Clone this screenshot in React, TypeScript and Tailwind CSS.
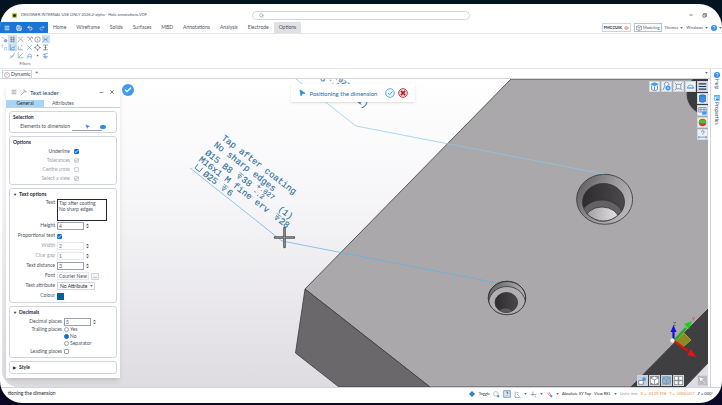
import { type ReactNode } from "react";
import { Check, Menu, Minus, MousePointer2, Redo2, Save, Search, Undo2, X } from "lucide-react";

const TABS = ["Home", "Wireframe", "Solids", "Surfaces", "MBD", "Annotations", "Analysis", "Electrode"];

function Icon({ children, className = "size-[9px]" }: { children: ReactNode; className?: string }) {
  return (
    <svg viewBox="0 0 12 12" className={className} fill="none" stroke="#4f7fae" strokeWidth="1">
      {children}
    </svg>
  );
}

function Caret() {
  return (
    <svg viewBox="0 0 4 3" className="h-[2px] w-[3px] shrink-0 fill-gray-500">
      <path d="M0 0h4L2 3z" />
    </svg>
  );
}

function HelpMark({ className = "size-[6px]" }: { className?: string }) {
  return (
    <svg viewBox="0 0 12 12" className={className} fill="none">
      <circle cx="6" cy="6" r="6" fill="#2b8cee" />
      <path d="M4 4.6a2 2 0 1 1 2.8 1.9Q6 7 6 7.6M6 9v1.2" stroke="#fff" strokeWidth="1.4" />
    </svg>
  );
}

function TitleBar() {
  return (
    <header className="flex h-[18px] items-center justify-between pr-[15px] pt-[4px] pl-3">
      <div className="flex w-60 items-center gap-[4px] text-[4px] text-gray-600">
        <span className="flex size-[5px] items-center justify-center rounded-[1px] bg-[#b5d334]">
          <span className="size-[3px] rounded-full bg-[#222]" />
        </span>
        DESIGNER INTERNAL USE ONLY 2026.2-alpha - Hole annotations.VDF
      </div>
      <label className="flex h-[9px] flex-1 items-center rounded-full border border-gray-300 px-[6px]">
        <Search className="size-[5px] text-gray-500" />
        <input aria-label="Search" className="h-1 min-w-0 flex-1 text-[5px] outline-none" />
      </label>
      <div className="flex w-[237px] items-center justify-end gap-[9px] text-gray-700">
        <button aria-label="Minimise">
          <Minus className="size-1" strokeWidth={4} />
        </button>
        <button aria-label="Restore">
          <Icon className="size-[5px]">
            <path d="M2 4h6v6H2zM4 4V1h7v7H8" stroke="#444" strokeWidth="1.5" />
          </Icon>
        </button>
      </div>
    </header>
  );
}

function MenuBar() {
  return (
    <nav className="flex h-3 items-stretch border-b border-gray-200 text-[5px] text-gray-600">
      <div className="flex w-12 items-center justify-around bg-[#1e74d2] pl-[1px] text-white">
        <button aria-label="Menu"><Menu className="size-[6px]" strokeWidth={3} /></button>
        <button aria-label="Save"><Save className="size-[6px]" strokeWidth={3} /></button>
        <button aria-label="Undo"><Undo2 className="size-[6px]" strokeWidth={3} /></button>
        <button aria-label="Redo" className="opacity-60"><Redo2 className="size-[6px]" strokeWidth={3} /></button>
      </div>
      {TABS.map((tab) => (
        <button key={tab} className="px-[5px]">{tab}</button>
      ))}
      <button className="bg-[#e2e0e4] px-[5px]">Options</button>
      <div className="ml-auto flex items-center gap-[3px] text-[4px]">
        <button className="flex h-[9px] items-center gap-[2px] border border-[#c5d8ea] px-[1px] font-bold text-gray-800">
          FMCCUIK
          <Icon className="h-[4px] w-[5px]">
            <ellipse cx="6" cy="6" rx="5" ry="4" stroke="#e05656" strokeWidth="2" />
            <circle cx="6" cy="6" r="1.5" fill="#e05656" stroke="none" />
          </Icon>
        </button>
        <button className="flex h-[9px] items-center gap-[1px] border border-[#a9c6e3] px-[1px]">
          <Icon className="size-[6px]">
            <path d="M6 1l5 2v6l-5 2-5-2V3zM1 3l5 2 5-2M6 5v6" stroke="#666" />
          </Icon>
          Modeling
        </button>
        <button className="flex items-center gap-[2px]">Themes <Caret /></button>
        <button className="flex items-center gap-[2px]">Windows <Caret /></button>
        <button aria-label="Help" className="flex items-center gap-[2px]"><HelpMark /> <Caret /></button>
      </div>
    </nav>
  );
}

const FILTERS: { name: string; on?: boolean; art: ReactNode }[] = [
  { name: "Point", art: <><path d="M1 3h2M5 3v2" /><circle cx="8" cy="8" r="2.2" fill="#7fbcf2" /></> },
  { name: "Grid", on: true, art: <path d="M2 3h8M2 6h8M2 9h8M4 1v10M8 1v10" stroke="#777" /> },
  { name: "Slope", art: <path d="M1 11l5-6 4-4M6 5l5 5M2 3h3" /> },
  { name: "Node", art: <path d="M1 2h4l5 8M10 2L4 8M8 2h3v3" /> },
  { name: "Centre", art: <><circle cx="6" cy="6" r="4.6" stroke="#666" /><path d="M6 4v4" /></> },
  { name: "Faces", on: true, art: <path d="M1 2l10 8M1 10l10-8M3 6h6" stroke="#3f8fdc" /> },
  { name: "Ends", art: <><path d="M1 2h3M1 5h2" /><path d="M6 6h4v4H6z" stroke="#9bb6cf" /></> },
  { name: "Edge", on: true, art: <><path d="M2 1v9h9M3 9l3-4 2 2 3-4" stroke="#2b7fd4" /><circle cx="7" cy="6" r="1.4" fill="#8bc34a" stroke="none" /></> },
  { name: "Corner", art: <path d="M2 3v7h8M8 2v2M5 7h2" stroke="#68836f" /> },
  { name: "Cross", art: <path d="M2 2l8 8M10 2l-8 8" stroke="#3f8fdc" /> },
  { name: "Quadrant", art: <><circle cx="6" cy="6" r="3.4" /><path d="M6 0v3M6 9v3M0 6h3M9 6h3" stroke="#555" /></> },
  { name: "Middle", art: <path d="M2 2h8M2 10h8M6 2v8M4 6h4" stroke="#555" /> },
  { name: "None", art: null },
  { name: "Line", art: <path d="M2 11l8-9M5 9l3-3M2 7h2" /> },
  { name: "Tangent", art: <><path d="M2 1v9h9" stroke="#68a868" /><path d="M3 9l7-7" /></> },
  { name: "Arc", art: <path d="M4 8a3 3 0 1 1 5 0H2v3M9 8v3" stroke="#3f8fdc" /> },
  { name: "Dot", art: <path d="M6 4.500v3M4.500 6h3" stroke="#555" /> },
  { name: "Surface", art: <path d="M1 5l9-3M2 8h8M3 10h6M5 3v7" stroke="#2b7fd4" /> },
];

function Ribbon() {
  return (
    <section className="h-[35px] border-b border-gray-200 pt-[1px]">
      <div className="grid w-[50px] grid-cols-6">
        {FILTERS.map((filter) => (
          <button
            key={filter.name}
            aria-label={filter.name}
            className={`flex h-2 items-center justify-center ${filter.on ? "bg-[#cfe3f7]" : ""}`}
          >
            <Icon className="size-[7px]">{filter.art}</Icon>
          </button>
        ))}
      </div>
      <p className="w-[50px] text-center text-[4px] leading-[9px] text-gray-600">Filters</p>
    </section>
  );
}

function Group({ title, arrow, children }: { title: string; arrow?: string; children?: ReactNode }) {
  return (
    <section className="rounded-[3px] border border-gray-300 px-[3px] py-[1px]">
      <h3 className="flex h-[9px] items-center text-[5px] font-bold text-gray-800">
        {arrow && <span className="w-[6px] text-[4px]">{arrow}</span>}
        {title}
      </h3>
      {children}
    </section>
  );
}

const ROW = {
  options: { row: "h-[9px] gap-[4px]", label: "w-[57px]" },
  text: { row: "h-[10px] gap-[2px]", label: "w-[42px]" },
  decimals: { row: "h-[9px] gap-[2px]", label: "w-[49px]" },
};

function Row({
  label,
  id,
  kind = "text",
  dim,
  children,
}: {
  label: string;
  id: string;
  kind?: keyof typeof ROW;
  dim?: boolean;
  children: ReactNode;
}) {
  return (
    <div className={`flex items-center ${ROW[kind].row}`}>
      <label
        htmlFor={id}
        className={`shrink-0 text-right whitespace-nowrap ${ROW[kind].label} ${dim ? "text-gray-400" : ""}`}
      >
        {label}
      </label>
      {children}
    </div>
  );
}

function Tick({ id, checked, dim }: { id: string; checked?: boolean; dim?: boolean }) {
  return (
    <span className="relative flex size-[5px]">
      <input
        id={id}
        type="checkbox"
        defaultChecked={checked}
        disabled={dim}
        className="size-[5px] appearance-none rounded-[1px] border border-gray-400 checked:border-[#0b6fe0] checked:bg-[#0b6fe0] disabled:border-gray-300 disabled:bg-gray-100"
      />
      {checked && (
        <Check
          className={`pointer-events-none absolute inset-0 size-[5px] ${dim ? "text-gray-400" : "text-white"}`}
          strokeWidth={4}
        />
      )}
    </span>
  );
}

function Spinner({ id, value, dim }: { id: string; value: string; dim?: boolean }) {
  return (
    <>
      <input
        id={id}
        defaultValue={value}
        disabled={dim}
        className="h-2 w-[27px] border border-gray-400 px-[1px] text-[5px] text-gray-600 disabled:border-gray-200 disabled:text-gray-500"
      />
      <svg viewBox="0 0 4 8" className="h-[6px] w-[3px] fill-gray-600">
        <path d="M0 3h4L2 1zM0 5h4L2 7z" />
      </svg>
    </>
  );
}

function LeaderPanel() {
  return (
    <aside className="absolute top-[5px] left-1 flex w-[114px] flex-col bg-white text-[5px] text-gray-600 shadow-md">
      <div className="flex h-4 items-center gap-[3px] px-[5px]">
        <Menu className="size-[6px]" strokeWidth={2} />
        <Icon className="size-[7px]">
          <path d="M1 11l6-6h4M8 2l3 3M7 1v3" />
        </Icon>
        <h2 className="flex-1 text-[6px] text-[#24456b]">Text leader</h2>
        <button aria-label="Collapse"><Minus className="size-[5px]" strokeWidth={3} /></button>
        <button aria-label="Close" className="ml-[2px]"><X className="size-[6px]" strokeWidth={3} /></button>
      </div>
      <div className="flex h-2 items-stretch border-b border-[#bcd9c6] leading-[7px]">
        <button className="w-[38px] bg-[#a9d3f7] text-gray-800">General</button>
        <button className="w-[38px]">Attributes</button>
      </div>
      <div className="flex flex-col gap-[3px] p-[3px] pb-[4px]">
        <Group title="Selection">
          <div className="flex h-[9px] items-center gap-[2px]">
            <label htmlFor="elements" className="w-[57px] text-right">Elements to dimension</label>
            <span className="flex h-full w-[30px] items-center justify-center border-b border-gray-400">
              <button id="elements" aria-label="Pick elements">
                <MousePointer2 className="size-[5px] fill-[#2b8cee] text-[#2b8cee]" />
              </button>
            </span>
            <span className="-ml-[4px] h-1 w-[6px] rounded-full bg-[#2b8cee]" />
          </div>
        </Group>
        <Group title="Options">
          <Row id="underline" label="Underline" kind="options"><Tick id="underline" checked /></Row>
          <Row id="tolerances" label="Tolerances" kind="options" dim><Tick id="tolerances" checked dim /></Row>
          <Row id="centre" label="Centre cross" kind="options" dim><Tick id="centre" dim /></Row>
          <Row id="view" label="Select a view" kind="options" dim><Tick id="view" checked dim /></Row>
        </Group>
        <Group title="Text options" arrow="▼">
          <div className="flex gap-[2px]">
            <label htmlFor="text" className="w-[42px] text-right leading-[7px]">Text</label>
            <textarea
              id="text"
              defaultValue={"Tap after coating\nNo sharp edges"}
              className="h-[22px] w-[50px] resize-none border border-gray-800 px-[1px] text-[5px] leading-[6px] outline-none"
            />
          </div>
          <Row id="height" label="Height"><Spinner id="height" value="4" /></Row>
          <Row id="proportional" label="Proportional text"><Tick id="proportional" checked /></Row>
          <Row id="width" label="Width" dim><Spinner id="width" value="2" dim /></Row>
          <Row id="gap" label="Char gap" dim><Spinner id="gap" value="1" dim /></Row>
          <Row id="distance" label="Text distance"><Spinner id="distance" value="3" /></Row>
          <Row id="font" label="Font">
            <input id="font" defaultValue="Courier New" className="h-2 w-8 border border-gray-200 px-[1px] text-[5px]" />
            <button aria-label="Choose font" className="h-[7px] w-2 border border-gray-300 bg-gray-100 leading-[3px]">...</button>
          </Row>
          <Row id="attribute" label="Text attribute">
            <span className="relative flex items-center">
              <select id="attribute" className="h-2 w-[38px] appearance-none border border-gray-300 px-[2px] text-[5px] text-gray-800">
                <option>No Attribute</option>
              </select>
              <span className="pointer-events-none absolute right-[2px]"><Caret /></span>
            </span>
          </Row>
          <Row id="colour" label="Colour">
            <button id="colour" aria-label="Colour" className="size-[7px] bg-[#0b5f96]" />
          </Row>
        </Group>
        <Group title="Decimals" arrow="▼">
          <Row id="places" label="Decimal places" kind="decimals"><Spinner id="places" value="5" /></Row>
          <fieldset className="flex gap-[2px]">
            <legend className="float-left w-[49px] text-right leading-[7px]">Trailing places</legend>
            <div>
              {["Yes", "No", "Separator"].map((option) => (
                <label key={option} className="flex h-[7px] items-center gap-[1px]">
                  <input
                    type="radio"
                    name="trailing"
                    defaultChecked={option === "No"}
                    className="size-[5px] appearance-none rounded-full border border-gray-400 checked:border-[#0b6fe0] checked:bg-[#0b6fe0]"
                  />
                  {option}
                </label>
              ))}
            </div>
          </fieldset>
          <Row id="leading" label="Leading places" kind="decimals"><Tick id="leading" /></Row>
        </Group>
        <Group title="Style" arrow="▶" />
      </div>
    </aside>
  );
}

// depth mark: bar, shaft and arrow head
function Depth({ x, y }: { x: number; y: number }) {
  return (
    <g transform={`translate(${x} ${y})`} stroke="#3d7ba3" strokeWidth="0.6" fill="none">
      <path d="M-.5-6h6M2.500-6v5M.5-4h4L2.500 0z" />
    </g>
  );
}

function Tolerance() {
  return (
    <>
      <text x="61" y="17" fontSize="7">+.027</text>
      <text x="61" y="23" fontSize="7">-.2</text>
      <text x="92" y="22">(1)</text>
    </>
  );
}

function Scene() {
  return (
    <svg viewBox="2 79 706 308" preserveAspectRatio="xMidYMid slice" className="size-full">
      <defs>
        <linearGradient id="backdrop" x1="0" y1="0" x2="0" y2="1">
          <stop offset="0" stopColor="#ffffff" />
          <stop offset="0.4" stopColor="#f6f5f8" />
          <stop offset="1" stopColor="#dedce0" />
        </linearGradient>
        <linearGradient id="bevel" x1="0" y1="0" x2="1" y2="0.5">
          <stop offset="0" stopColor="#555356" />
          <stop offset="0.6" stopColor="#9b999c" />
          <stop offset="1" stopColor="#b5b3b6" />
        </linearGradient>
        <linearGradient id="bore" x1="0" y1="0" x2="1" y2="0">
          <stop offset="0" stopColor="#2c2b2d" />
          <stop offset="1" stopColor="#4b494c" />
        </linearGradient>
        <linearGradient id="floor" x1="0" y1="0" x2="1" y2="0">
          <stop offset="0" stopColor="#9d9b9e" />
          <stop offset="1" stopColor="#e6e5e7" />
        </linearGradient>
        <clipPath id="big-bore"><ellipse cx="603.5" cy="202" rx="21" ry="18.500" /></clipPath>
        <clipPath id="small-rim"><ellipse cx="507" cy="298" rx="18.700" ry="16.700" /></clipPath>
        <clipPath id="small-bore"><ellipse cx="506.3" cy="302.500" rx="11.300" ry="10" /></clipPath>
      </defs>
      <rect x="2" y="79" width="706" height="308" fill="url(#backdrop)" />

      <g stroke="#3c3a3d" strokeWidth="0.8" strokeLinejoin="round">
        <path d="M511 79H709V308L631 387H430L305 289z" fill="#aaa8ab" />
        <path d="M305 289L295.500 353 339 387H430z" fill="#6a686b" />
        <path d="M709 308L631 387H685L709 362z" fill="#3f3e40" />
        <circle cx="708" cy="94" r="21" fill="#3b3a3c" />
      </g>

      <g stroke="#333" strokeWidth="0.8">
        <ellipse cx="604.600" cy="199.300" rx="28" ry="25" fill="url(#bevel)" />
        <ellipse cx="603.500" cy="202" rx="21" ry="18.500" fill="url(#bore)" />
        <g clipPath="url(#big-bore)">
          <ellipse cx="602" cy="217" rx="21" ry="17" fill="#636164" />
          <ellipse cx="602" cy="220" rx="17" ry="13" fill="url(#floor)" />
        </g>
        <path d="M586 213Q603 230 620 213" fill="none" strokeWidth="0.6" />
      </g>
      <g stroke="#333" strokeWidth="0.8">
        <ellipse cx="507" cy="298" rx="18.700" ry="16.700" fill="url(#bevel)" />
        <g clipPath="url(#small-rim)">
          <ellipse cx="507" cy="303.500" rx="18.500" ry="17" fill="#b0aeb1" />
        </g>
        <ellipse cx="507" cy="298" rx="18.700" ry="16.700" fill="none" />
        <ellipse cx="506.300" cy="302.500" rx="11.300" ry="10" fill="url(#bore)" />
        <g clipPath="url(#small-bore)">
          <ellipse cx="505.500" cy="314" rx="8" ry="6" fill="#5b595c" strokeWidth="0.5" />
        </g>
      </g>

      <g fill="none" stroke="#5bb3e6" strokeWidth="0.7">
        <path d="M296 79L356 126 604 174" stroke="#86c8ee" />
        <path d="M190 168L282 241 497 283" />
      </g>

      <g fill="#2a6f9c" stroke="#2a6f9c" strokeWidth="0.1" fontFamily="Liberation Mono, monospace" fontSize="9">
        <g transform="translate(221 139) rotate(37.500)">
          <text x="0" y="0">Tap after coating</text>
          <text x="-2" y="10">No sharp edges</text>
          <g transform="translate(-4 0)">
            <text x="0" y="22">Ø15 B8</text>
            <Depth x={39} y={21} />
            <text x="45" y="21">38</text>
            <Tolerance />
            <text x="-1" y="31">M16x1 M fine erv</text>
            <path d="M1 34v5h6v-5" fill="none" strokeWidth="0.8" />
            <text x="11" y="40">Ø25</text>
            <Depth x={34} y={40} />
            <text x="41" y="40">6</text>
            <Depth x={94} y={31} />
            <text x="100" y="31">28</text>
          </g>
        </g>
        <g transform="translate(293 25) rotate(37.500)">
          <text x="54" y="27">8</text>
          <Tolerance />
        </g>
      </g>

      <path d="M284.500 228v19M275 237.500h19" stroke="#555" strokeWidth="2.600" strokeLinecap="round" />
      <path d="M284.500 228v19M275 237.500h19" stroke="#999" strokeWidth="0.700" />

      <g>
        <path d="M675 341l9-8 7 7-8 7z" fill="#8c8a24" stroke="#c9c51e" strokeWidth="0.6" />
        <path d="M674 341l12-13" stroke="#15b01a" strokeWidth="2.200" />
        <path d="M692 321l-3 8-5-5z" fill="#15d41a" />
        <path d="M674 341l14 10" stroke="#d81212" strokeWidth="2.200" />
        <path d="M696 357l-9-2 4-6z" fill="#e81212" />
        <path d="M673.500 341v-9" stroke="#1515c8" strokeWidth="2.200" />
        <path d="M673.500 325l3 7h-6z" fill="#1515e0" />
        <circle cx="672.500" cy="340.500" r="2.200" fill="#eee" />
        <text x="673" y="326" fontFamily="Lato" fontSize="5" fill="#555">Z</text>
        <text x="692" y="321" fontFamily="Lato" fontSize="5" fill="#e03030">Y</text>
      </g>
    </svg>
  );
}

function ViewButton({ label, tone = "bg-[#eef0f4]", children }: { label: string; tone?: string; children: ReactNode }) {
  return (
    <button aria-label={label} className={`flex size-[11px] items-center justify-center border border-gray-300 ${tone}`}>
      <Icon>{children}</Icon>
    </button>
  );
}

function Viewport() {
  return (
    <main className="relative mr-[2px] ml-[2px] min-h-0 flex-1 overflow-hidden rounded-bl-[16px]">
      <div className="absolute inset-0"><Scene /></div>
      <LeaderPanel />
      <button
        aria-label="Apply"
        className="absolute top-[5px] left-[120px] flex size-3 items-center justify-center rounded-full bg-[#3d9bf0] text-white"
      >
        <Check className="size-2" strokeWidth={4} />
      </button>

      <div className="absolute top-[5px] left-[41%] flex h-[18px] w-[124px] items-center rounded-[1px] bg-white px-[7px] shadow">
        <MousePointer2 className="size-2 rotate-12 fill-[#2b8cee] text-[#2b8cee]" />
        <span className="flex-1 pl-[3px] text-[6px] whitespace-nowrap text-[#2369a8]">Positioning the dimension</span>
        <button aria-label="Accept">
          <Icon className="size-[10px]">
            <circle cx="6" cy="6" r="5.200" fill="#eaf5fe" stroke="#4aa0e6" />
            <path d="M3.500 6l2 2 3.500-4" stroke="#3b8fd8" />
          </Icon>
        </button>
        <button aria-label="Cancel" className="ml-[3px]">
          <Icon className="size-[10px]">
            <circle cx="6" cy="6" r="5.200" fill="#f6dada" stroke="#b3202c" />
            <path d="M3.500 3.500l5 5M8.500 3.500l-5 5" stroke="#b3202c" strokeWidth="2" />
          </Icon>
        </button>
      </div>

      <div className="absolute top-[2px] right-0 flex items-start gap-[1px]">
        <ViewButton label="View">
          <path d="M1 3l5-2 5 2-5 2z" fill="#3d9bf0" stroke="#3d9bf0" />
          <path d="M2 5v5l4 2 4-2V5M6 6v5" />
        </ViewButton>
        <ViewButton label="Zoom">
          <path d="M1 11l3-6a3 3 0 1 1 5-1" />
          <circle cx="8" cy="8" r="3" fill="#3d9bf0" stroke="#3d9bf0" />
          <path d="M6.500 8h3" stroke="#fff" />
        </ViewButton>
        <ViewButton label="Fit">
          <path d="M1 1l2 2v6l-2 2M11 1L9 3v6l2 2M3 3h6M3 9h6" stroke="#6f86a3" />
        </ViewButton>
        <ViewButton label="Rotate">
          <path d="M2 8a4 4 0 1 1 8 0zM1 8h10" stroke="#3d9bf0" />
        </ViewButton>
        <div className="flex flex-col gap-[1px]">
          <ViewButton label="Layers" tone="bg-[#d9dce6]">
            <path d="M1 2.500h10M1 6h10M1 9.500h10" stroke="#26375e" strokeWidth="1.600" />
          </ViewButton>
          <ViewButton label="Shading">
            <path d="M2 2v8q4 2 8 0V2q-4-2-8 0z" fill="#3d8fe8" stroke="#2a6bbd" />
            <path d="M2 2q4 2 8 0" stroke="#2a6bbd" />
          </ViewButton>
          <ViewButton label="Grid">
            <path d="M1 2h10v6H1zM1 5h10M4 2v6M8 2v6" stroke="#6f86a3" />
            <path d="M6 8h5v3H6z" fill="#3d9bf0" stroke="#3d9bf0" />
          </ViewButton>
          <ViewButton label="Material">
            <circle cx="6" cy="6" r="5" fill="#d33" stroke="none" />
            <path d="M1 7a5 5 0 1 1 10 0z" fill="#43c52c" stroke="none" />
          </ViewButton>
          <ViewButton label="Measure">
            <path d="M4.500 3q0-2 2-2t1.500 2Q7 4 6.500 5v1M1 8v3M11 8v3M1 9.500h10" />
          </ViewButton>
        </div>
      </div>

      <div className="absolute right-0 bottom-[1px] flex items-center gap-[1px]">
        <ViewButton label="Part" tone="bg-[#c9ccd2]">
          <path d="M1 6h6v5H1z" fill="#fff" />
          <circle cx="8" cy="4" r="2.500" fill="#3d9bf0" stroke="none" />
        </ViewButton>
        <ViewButton label="Solid" tone="bg-[#8f9197]">
          <path d="M6 1l5 2v6l-5 2-5-2V3z" fill="#fff" stroke="none" />
          <path d="M1 3l5 2 5-2M6 5v6" stroke="#777" />
        </ViewButton>
        <ViewButton label="Wire" tone="bg-[#a9afb8]">
          <path d="M6 1l5 2v6l-5 2-5-2V3zM1 3l5 2 5-2M6 5v6" stroke="#4b9fe6" />
        </ViewButton>
        <ViewButton label="Windows" tone="bg-[#8f9197]">
          <path d="M1 1h4v4H1zM7 1h4v4H7zM1 7h4v4H1zM7 7h4v4H7z" fill="#fff" stroke="none" />
        </ViewButton>
        <span className="w-[11px]" />
        <ViewButton label="Pointer" tone="bg-[#bdbdc3]">
          <path d="M1 1l7 2-2 2 5 5-1 1-5-5-2 2z" fill="#fff" stroke="#777" strokeWidth="0.5" />
        </ViewButton>
      </div>
    </main>
  );
}

function SideDock() {
  return (
    <aside className="flex w-[12px] flex-col items-center gap-[6px] border-l border-gray-300 pt-[3px] text-[5px] text-gray-600">
      <button className="flex flex-col items-center gap-[1px]">
        <HelpMark />
        <span className="leading-[8px] [writing-mode:vertical-rl]">Help</span>
      </button>
      <button className="flex flex-col items-center gap-[1px]">
        <Icon className="size-[6px]">
          <path d="M1 1h10v10H1z" fill="#dff" stroke="#2b8cee" />
          <path d="M1 2h10M4 6h6M4 9h6" stroke="#2b8cee" strokeWidth="2" />
        </Icon>
        <span className="leading-[8px] [writing-mode:vertical-rl]">Properties</span>
      </button>
    </aside>
  );
}

function StatusBar() {
  return (
    <footer className="flex h-4 shrink-0 items-center gap-[3px] border-t border-gray-300 pr-[9px] pb-[3px] pl-2 text-[4px] whitespace-nowrap text-gray-800">
      <span className="flex-1 text-[5px]">tioning the dimension</span>
      <button className="flex items-center gap-[4px]">
        <Icon className="size-[6px]">
          <path d="M6 0l3 3 3 3-3 3-3 3-3-3-3-3 3-3z" fill="#2b7fd4" stroke="none" />
        </Icon>
        Toggle
      </button>
      <Icon className="size-[7px]">
        <circle cx="5" cy="5" r="4" stroke="#999" />
        <circle cx="9" cy="9" r="2" fill="#3d9bf0" stroke="none" />
      </Icon>
      <Icon className="size-2">
        <path d="M1 1h10v10H1z" fill="#d5e7f9" />
        <path d="M5 3h2v3M6 8v1" stroke="#234" />
      </Icon>
      <Icon className="size-[7px]"><path d="M2 1v10h9M4 3h4M5 5l4 4" /></Icon>
      <Caret />
      <Icon className="size-[7px]"><path d="M5 1v8M1 6h10M9 8v3" /></Icon>
      <Caret />
      <Icon className="size-[7px]">
        <path d="M2 3l5 6M5 2l4 6" stroke="#d33" />
        <circle cx="9" cy="9" r="2" fill="#3d9bf0" stroke="none" />
      </Icon>
      <Caret />
      <span>Absolute XY Top</span>
      <span>View REL</span>
      <Caret />
      <span className="text-gray-400">Units: mm</span>
      <span className="text-[#ee8a3c]">X = -0139.198</span>
      <span className="text-[#ee8a3c]">Y = -0300.057</span>
      <span>Z = 000°</span>
    </footer>
  );
}

export default function App() {
  return (
    <div className="h-screen bg-linear-to-b from-[#02141f] to-[#0a0824] pt-1 pb-[2px] font-[Lato,sans-serif]">
      <div className="flex h-full flex-col overflow-hidden rounded-t-[23px] rounded-b-[22px] bg-white">
        <TitleBar />
        <MenuBar />
        <Ribbon />
        <div className="flex min-h-0 flex-1">
          <div className="flex min-w-0 flex-1 flex-col">
            <div className="flex h-[10px] items-end border-b border-gray-300 pr-[2px] pl-[2px] text-[5px] text-gray-700">
              <button className="flex h-2 items-center gap-[1px] border border-b-0 border-gray-300 px-[1px]">
                <Icon className="size-[6px]"><circle cx="6" cy="6" r="5" stroke="#777" /><path d="M6 3v4" stroke="#777" /></Icon>
                Dynamic
              </button>
              <button aria-label="New view" className="h-2 px-[3px]">+</button>
              <span className="mb-[4px] ml-auto"><Caret /></span>
            </div>
            <Viewport />
          </div>
          <SideDock />
        </div>
        <StatusBar />
      </div>
    </div>
  );
}
